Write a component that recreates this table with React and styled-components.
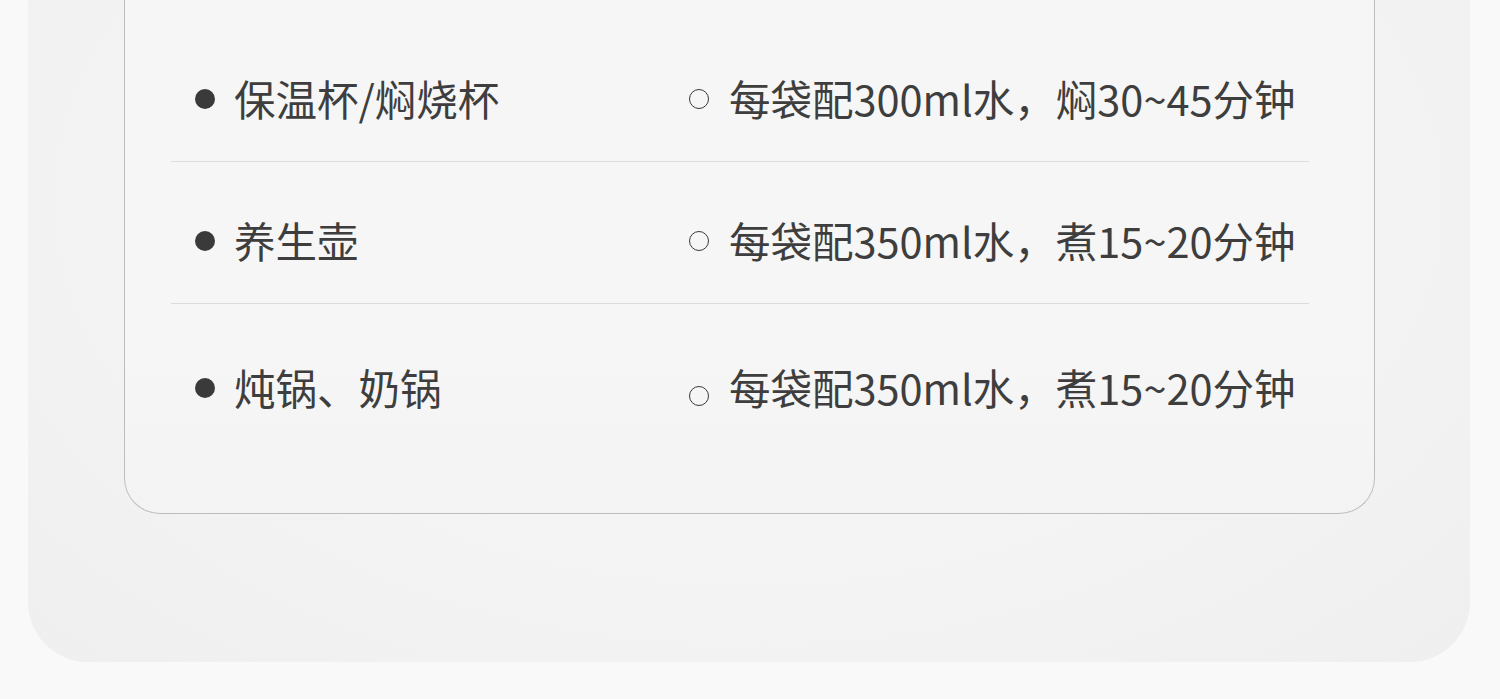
import React from "react"
import styled, { createGlobalStyle } from "styled-components"

const GlobalStyle = createGlobalStyle`
  html, body {
    margin: 0;
    padding: 0;
    background: #f9f9f9;
  }
  body {
    font-family: "Noto Sans CJK SC", "Noto Sans", sans-serif;
  }
`

const Page = styled.div`
  width: 1500px;
  height: 699px;
  overflow: hidden;
  box-sizing: border-box;
  padding: 0 30px 38px 28px;
`

const OuterCard = styled.div`
  box-sizing: border-box;
  padding: 0 95px 148px 96px;
  border-radius: 0 0 60px 60px;
  background: radial-gradient(ellipse at 50% 30%, #f7f7f7 0%, #f3f3f3 60%, #efefef 100%);
`

const InnerCard = styled.div`
  box-sizing: border-box;
  padding: 20px 65px 68px 46px;
  border: 1px solid #bdbdbd;
  border-top: none;
  border-radius: 0 0 36px 36px;
  background: linear-gradient(180deg, #f6f6f6 0%, #f6f6f6 70%, #f3f3f3 100%);
`

const Row = styled.div`
  display: grid;
  grid-template-columns: 494px 1fr;
  align-items: center;
  padding: ${(p) => (p.last ? "63px 0 37px 24px" : "58px 0 42px 24px")};
  border-bottom: ${(p) => (p.last ? "none" : "1px solid #dcdcdc")};
  color: #3e3e3e;
  font-size: 41.5px;
  font-weight: 400;
  line-height: 41px;
`

const Cell = styled.div`
  display: flex;
  align-items: center;
  white-space: nowrap;
`

const Dot = styled.span`
  flex: none;
  width: 20px;
  height: 20px;
  border-radius: 50%;
  background: #3a3a3a;
  margin-right: 19px;
`

const Ring = styled.span`
  flex: none;
  box-sizing: border-box;
  width: 20px;
  height: 20px;
  border-radius: 50%;
  border: 1.6px solid #3a3a3a;
  margin-right: 20px;
  transform: translateY(${(p) => (p.drop ? "8px" : "0")});
`

const rows = [
  { name: "保温杯/焖烧杯", note: "每袋配300ml水，焖30~45分钟" },
  { name: "养生壶", note: "每袋配350ml水，煮15~20分钟" },
  { name: "炖锅、奶锅", note: "每袋配350ml水，煮15~20分钟", drop: true },
]

export default function App() {
  return (
    <Page>
      <GlobalStyle />
      <OuterCard>
        <InnerCard>
          {rows.map((r, i) => (
            <Row key={i} last={i === rows.length - 1}>
              <Cell>
                <Dot />
                {r.name}
              </Cell>
              <Cell>
                <Ring drop={r.drop} />
                {r.note}
              </Cell>
            </Row>
          ))}
        </InnerCard>
      </OuterCard>
    </Page>
  )
}
